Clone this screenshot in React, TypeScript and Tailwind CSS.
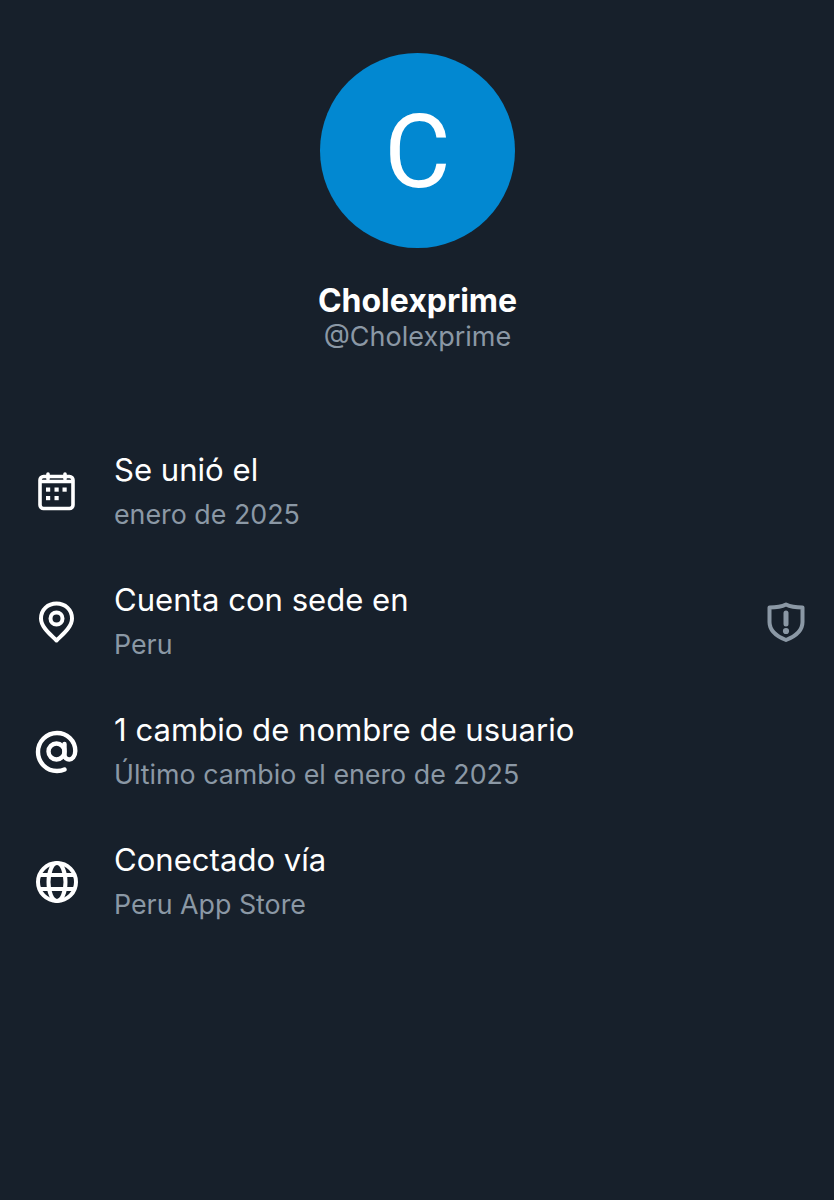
import type { ReactNode } from 'react'

const FONT = "font-['Inter','Noto_Sans',sans-serif]"

function CalendarIcon() {
  return (
    <svg className="w-10 h-10" viewBox="0 0 40 40" fill="none" stroke="currentColor" strokeWidth={3.6}>
      <rect x="3" y="4.5" width="33" height="32" rx="3.5" />
      <path d="M3 9.5h33" />
      <path d="M11 2v5M28 2v5" strokeLinecap="round" />
      <g fill="currentColor" stroke="none">
        <rect x="9" y="15.5" width="4.2" height="4.2" />
        <rect x="17.5" y="15.5" width="4.2" height="4.2" />
        <rect x="25.5" y="15.5" width="4.2" height="4.2" />
        <rect x="9" y="24" width="4.2" height="4.2" />
        <rect x="17.5" y="24" width="4.2" height="4.2" />
      </g>
    </svg>
  )
}

function PinIcon() {
  return (
    <svg className="w-11 h-11" viewBox="0 0 44 44" fill="none" stroke="currentColor" strokeWidth={4}>
      <path d="M21.5 40.5 C15 34 6 27 6 18.5 C6 9.5 13 3.5 21.5 3.5 C30 3.5 37 9.5 37 18.5 C37 27 28 34 21.5 40.5 Z" strokeLinejoin="round" />
      <circle cx="21.5" cy="18.5" r="6" />
    </svg>
  )
}

function AtIcon() {
  return (
    <svg className="w-11 h-11" viewBox="0 0 44 44" fill="none" stroke="currentColor" strokeWidth={4.4} strokeLinecap="round">
      <circle cx="21.5" cy="21.5" r="8" />
      <path d="M29.5 14v10.5c0 3.5 2.3 5 4.8 5s6-3 6-8.5C40.3 10.5 32 3 22 3 11.5 3 3 11.5 3 22s8.5 19 19 19c3 0 5.5-.5 7.5-1.5" />
    </svg>
  )
}

function GlobeIcon() {
  return (
    <svg className="w-11 h-11" viewBox="0 0 44 44" fill="none" stroke="currentColor" strokeWidth={4}>
      <circle cx="22" cy="22" r="19" />
      <ellipse cx="22" cy="22" rx="8.5" ry="19" />
      <path d="M4 15h36M4 29h36" />
    </svg>
  )
}

function ShieldAlertIcon() {
  return (
    <svg className="w-10 h-10 text-[#8b98a5]" viewBox="0 0 40 40" fill="none" stroke="currentColor" strokeWidth={4}>
      <path d="M20 2.5 C25 5 30 5.5 36.5 5.5 V20 C36.5 29 29 34.5 20 38 C11 34.5 3.5 29 3.5 20 V5.5 C10 5.5 15 5 20 2.5 Z" strokeLinejoin="round" />
      <path d="M20 11v11" strokeWidth={5} strokeLinecap="round" />
      <circle cx="20" cy="29" r="3.1" fill="currentColor" stroke="none" />
    </svg>
  )
}

const ROWS: { icon: ReactNode; title: string; detail: string; badge?: boolean }[] = [
  { icon: <CalendarIcon />, title: 'Se unió el', detail: 'enero de 2025' },
  { icon: <PinIcon />, title: 'Cuenta con sede en', detail: 'Peru', badge: true },
  { icon: <AtIcon />, title: '1 cambio de nombre de usuario', detail: 'Último cambio el enero de 2025' },
  { icon: <GlobeIcon />, title: 'Conectado vía', detail: 'Peru App Store' },
]

export default function App() {
  return (
    <div className={`${FONT} w-full h-[1200px] bg-[#17202b] text-white flex flex-col overflow-hidden`}>
      {/* Profile header */}
      <div className="flex flex-col items-center pt-[53px] pl-[1px]">
        <div className="w-[195px] h-[195px] pt-[2px] rounded-full bg-[#0288d1] flex items-center justify-center">
          <span className="font-['Roboto',sans-serif] text-[102px] leading-none">C</span>
        </div>
        <h1 className="mt-[35px] text-[32px] leading-[36px] font-bold">Cholexprime</h1>
        <p className="text-[27px] leading-[36px] text-[#8b98a5]">@Cholexprime</p>
      </div>

      {/* About rows */}
      <div className="mt-[91px] flex flex-col gap-[38px] pl-[35px] pr-[28px]">
        {ROWS.map((row) => (
          <div key={row.title} className="flex items-center h-[92px]">
            <div className="w-[44px] h-[44px] flex items-center justify-center">{row.icon}</div>
            <div className="ml-[35px] flex-1">
              <div className="text-[31.1px] leading-[44px]">{row.title}</div>
              <div className="text-[26.8px] leading-[44px] text-[#8b98a5]">{row.detail}</div>
            </div>
            {row.badge && <ShieldAlertIcon />}
          </div>
        ))}
      </div>
    </div>
  )
}
